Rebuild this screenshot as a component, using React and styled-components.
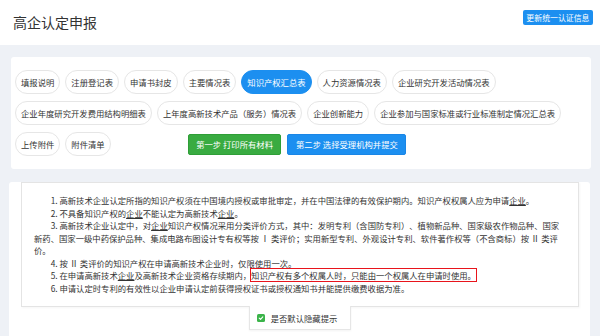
import React from "react";
import styled, { createGlobalStyle } from "styled-components";

const GlobalStyle = createGlobalStyle`
  html, body {
    margin: 0;
    padding: 0;
    background: #eef1f6;
    font-family: "Noto Sans CJK SC", "Noto Sans", sans-serif;
    color: #333;
    text-spacing-trim: space-all;
  }
  * { box-sizing: border-box; }
`;

const Page = styled.div`
  min-height: 336px;
  overflow: hidden;
`;

const Header = styled.header`
  height: 45px;
  background: #fff;
  display: flex;
  align-items: flex-start;
  justify-content: space-between;
  padding: 10px 7px 0 13px;
`;

const Title = styled.h1`
  margin: 0;
  font-size: 14px;
  font-weight: 400;
  line-height: 24px;
  color: #333;
`;

const HeaderButton = styled.button`
  height: 15px;
  padding: 0 3.5px;
  border: none;
  border-radius: 2px;
  background: #1c8ff0;
  color: #fff;
  font-family: inherit;
  font-size: 7.9px;
  line-height: 15px;
  white-space: nowrap;
`;

const NavCard = styled.section`
  margin: 12px 9px 0 11px;
  padding: 13px 4px;
  background: #fff;
  border-radius: 3px;
  display: flex;
  flex-direction: column;
  gap: 7px;
`;

const TagList = styled.div`
  display: flex;
  flex-wrap: wrap;
  gap: 7px 5px;
`;

const Tag = styled.span`
  height: 24px;
  padding: 0 5px;
  border: 1px solid ${(p) => (p.$active ? "#1c8ff0" : "#e6e6e6")};
  border-radius: 12px;
  background: ${(p) => (p.$active ? "#1c8ff0" : "#fff")};
  color: ${(p) => (p.$active ? "#fff" : "#333")};
  font-size: 8.33px;
  line-height: 22px;
  white-space: nowrap;
`;

const ActionRow = styled.div`
  display: flex;
  align-items: center;
  gap: 5px;
`;

const StepButtons = styled.div`
  display: flex;
  gap: 6px;
  margin-left: 72px;
`;

const StepButton = styled.button`
  height: 21px;
  padding: 0 7.5px;
  border: 1px solid ${(p) => (p.$tone === "green" ? "#2f9e37" : "#1a86e6")};
  border-radius: 2px;
  background: ${(p) => (p.$tone === "green" ? "#39ab41" : "#1c8ff0")};
  color: #fff;
  font-family: inherit;
  font-size: 8.33px;
  line-height: 19px;
  white-space: nowrap;
`;

const NoticePanel = styled.section`
  margin: 13px 10px 0 9px;
  padding: 0 11px 20px 12px;
  background: #fff;
  border-radius: 3px;
  display: flex;
  flex-direction: column;
`;

const NoticeBox = styled.div`
  border: 1px solid #e4e4e4;
  padding: 11px 15px 12px 12px;
  box-shadow: 1px 1px 2px rgba(0, 0, 0, 0.04);
`;

const Item = styled.p`
  margin: 0;
  text-indent: 2em;
  font-size: 8.33px;
  line-height: 12.55px;
  color: #333;
`;

const Term = styled.span`
  text-decoration: underline;
  text-underline-offset: 1px;
`;

const Highlight = styled.span`
  outline: 1.5px solid #e8141c;
  outline-offset: 0.5px;
`;

const ToggleTab = styled.label`
  align-self: center;
  display: flex;
  align-items: center;
  gap: 6px;
  height: 24px;
  margin-top: -1px;
  padding: 0 13px 0 7px;
  background: #fff;
  border: 1px solid #e6e6e6;
  border-top: none;
  box-shadow: 0 1px 2px rgba(0, 0, 0, 0.05);
  font-size: 8.33px;
  color: #333;
  white-space: nowrap;
`;

const CheckMark = styled.span`
  width: 8px;
  height: 8px;
  border-radius: 1.5px;
  background: #3bb44a;
  display: flex;
  align-items: center;
  justify-content: center;
`;

const tagsTop = [
  "填报说明",
  "注册登记表",
  "申请书封皮",
  "主要情况表",
  "知识产权汇总表",
  "人力资源情况表",
  "企业研究开发活动情况表",
  "企业年度研究开发费用结构明细表",
  "上年度高新技术产品（服务）情况表",
  "企业创新能力",
  "企业参加与国家标准或行业标准制定情况汇总表",
];

export default function App() {
  return (
    <Page>
      <GlobalStyle />
      <Header>
        <Title>高企认定申报</Title>
        <HeaderButton>更新统一认证信息</HeaderButton>
      </Header>

      <NavCard>
        <TagList>
          {tagsTop.map((t) => (
            <Tag key={t} $active={t === "知识产权汇总表"}>
              {t}
            </Tag>
          ))}
        </TagList>
        <ActionRow>
          <Tag>上传附件</Tag>
          <Tag>附件清单</Tag>
          <StepButtons>
            <StepButton $tone="green">第一步 打印所有材料</StepButton>
            <StepButton $tone="blue">第二步 选择受理机构并提交</StepButton>
          </StepButtons>
        </ActionRow>
      </NavCard>

      <NoticePanel>
        <NoticeBox>
          <Item>
            1. 高新技术企业认定所指的知识产权须在中国境内授权或审批审定，并在中国法律的有效保护期内。知识产权权属人应为申请
            <Term>企业</Term>。
          </Item>
          <Item>
            2. 不具备知识产权的<Term>企业</Term>不能认定为高新技术<Term>企业</Term>。
          </Item>
          <Item>
            3. 高新技术企业认定中，对<Term>企业</Term>知识产权情况采用分类评价方式，其中：发明专利（含国防专利）、植物新品种、国家级农作物品种、国家新药、国家一级中药保护品种、集成电路布图设计专有权等按 Ⅰ 类评价；实用新型专利、外观设计专利、软件著作权等（不含商标）按 Ⅱ 类评价。
          </Item>
          <Item>4. 按 Ⅱ 类评价的知识产权在申请高新技术企业时，仅限使用一次。</Item>
          <Item>
            5. 在申请高新技术<Term>企业</Term>及高新技术企业资格存续期内，
            <Highlight>知识产权有多个权属人时，只能由一个权属人在申请时使用。</Highlight>
          </Item>
          <Item>
            6. 申请认定时专利的有效性以企业申请认定前获得授权证书或授权通知书并能提供缴费收据为准。
          </Item>
        </NoticeBox>
        <ToggleTab>
          <CheckMark>
            <svg width="6" height="6" viewBox="0 0 10 10" fill="none">
              <path d="M2 5.2 L4.2 7.3 L8 3" stroke="#fff" strokeWidth="1.8" strokeLinecap="round" strokeLinejoin="round" />
            </svg>
          </CheckMark>
          是否默认隐藏提示
        </ToggleTab>
      </NoticePanel>
    </Page>
  );
}
